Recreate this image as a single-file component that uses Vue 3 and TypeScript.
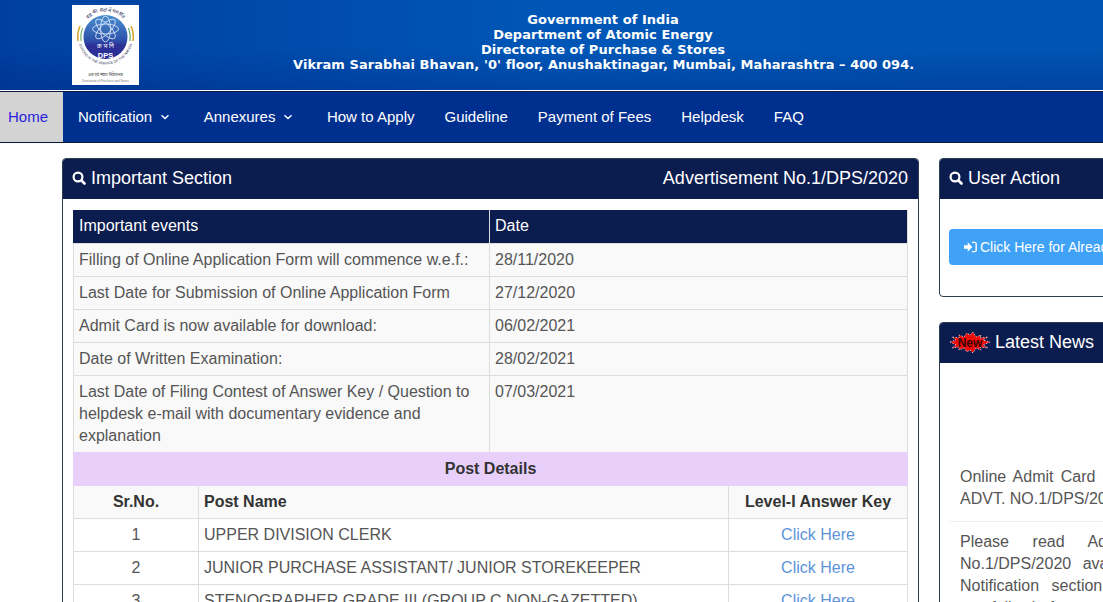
<script setup lang="ts">
const navItems = [
  { label: "Notification", caret: true },
  { label: "Annexures", caret: true },
  { label: "How to Apply", caret: false },
  { label: "Guideline", caret: false },
  { label: "Payment of Fees", caret: false },
  { label: "Helpdesk", caret: false },
  { label: "FAQ", caret: false },
];

const events = [
  { name: "Filling of Online Application Form will commence w.e.f.:", date: "28/11/2020" },
  { name: "Last Date for Submission of Online Application Form", date: "27/12/2020" },
  { name: "Admit Card is now available for download:", date: "06/02/2021" },
  { name: "Date of Written Examination:", date: "28/02/2021" },
  {
    name: "Last Date of Filing Contest of Answer Key / Question to helpdesk e-mail with documentary evidence and explanation",
    date: "07/03/2021",
  },
];

const posts = [
  "UPPER DIVISION CLERK",
  "JUNIOR PURCHASE ASSISTANT/ JUNIOR STOREKEEPER",
  "STENOGRAPHER GRADE III (GROUP C NON-GAZETTED)",
];

const burst =
  "0,10 6,8 2,5 9,6 9,3 14,5 17,1 20,3 23,0 26,5 31,3 30,6 38,5 33,8 40,10 33,13 38,16 30,15 31,18 26,16 23,21 20,18 17,20 14,16 9,18 9,15 2,16 6,13";
</script>

<template>
  <header class="top">
    <svg class="logo" viewBox="0 0 67 80" width="67" height="80">
      <defs>
        <linearGradient id="disc" x1="0" y1="0" x2="0" y2="1">
          <stop offset="0" stop-color="#4a90d0" />
          <stop offset="0.55" stop-color="#2f55ad" />
          <stop offset="0.7" stop-color="#2b2f96" />
        </linearGradient>
        <path id="ring-top" d="M8 32a25.500 25.500 0 0 1 51 0" />
        <path id="ring-bottom" d="M6 32a27.500 27.500 0 0 0 55 0" />
      </defs>
      <rect width="67" height="80" fill="#fff" />
      <path d="M6 36a28 28 0 0 1 2-15" fill="none" stroke="#d9a531" stroke-width="1.600" />
      <path d="M9 36a25 25 0 0 1 1.500-13" fill="none" stroke="#5aa54f" stroke-width="1" />
      <path d="M61 36a28 28 0 0 0-2-15" fill="none" stroke="#d9a531" stroke-width="1.600" />
      <path d="M58 36a25 25 0 0 0-1.500-13" fill="none" stroke="#3c9a4a" stroke-width="1" />
      <circle cx="33.500" cy="32" r="22" fill="url(#disc)" />
      <g fill="none" stroke="#e4edf9" stroke-width="0.800">
        <ellipse cx="33.500" cy="24" rx="5" ry="13" />
        <ellipse cx="33.500" cy="24" rx="5" ry="13" transform="rotate(45 33.500 24)" />
        <ellipse cx="33.500" cy="24" rx="5" ry="13" transform="rotate(90 33.500 24)" />
        <ellipse cx="33.500" cy="24" rx="5" ry="13" transform="rotate(135 33.500 24)" />
      </g>
      <text x="33.500" y="43" class="logo-hi">क भ नि</text>
      <text x="33.500" y="53" class="logo-dps">DPS</text>
      <text class="logo-ring logo-ring-hi">
        <textPath href="#ring-top" startOffset="50%">राष्ट्र की सेवा में समर्पित</textPath>
      </text>
      <text class="logo-ring">
        <textPath href="#ring-bottom" startOffset="50%">STRONG IN THE SERVICE OF THE NATION</textPath>
      </text>
      <text x="33.500" y="71" class="logo-small">क्रय एवं भंडार निदेशालय</text>
      <text x="33.500" y="77" class="logo-tiny">Directorate of Purchase and Stores</text>
    </svg>
    <div class="top-text">
      <div>Government of India</div>
      <div>Department of Atomic Energy</div>
      <div>Directorate of Purchase &amp; Stores</div>
      <div>Vikram Sarabhai Bhavan, '0' floor, Anushaktinagar, Mumbai, Maharashtra – 400 094.</div>
    </div>
  </header>

  <nav class="nav">
    <a class="nav-home">Home</a>
    <a v-for="item in navItems" :key="item.label" class="nav-item">
      {{ item.label }}
      <svg v-if="item.caret" class="caret" viewBox="0 0 10 6" width="10" height="6">
        <path d="M1.500 1.200 5 4.600l3.500-3.400" fill="none" stroke="#fff" stroke-width="1.400" />
      </svg>
    </a>
  </nav>

  <main class="page">
    <section class="panel panel-main">
      <div class="panel-head">
        <h3>
          <svg class="search" viewBox="0 0 14 14" width="14" height="14">
            <circle cx="6" cy="6" r="4.400" fill="none" stroke="#fff" stroke-width="2.200" />
            <path d="M9.500 9.500l3 3" stroke="#fff" stroke-width="2.600" stroke-linecap="round" />
          </svg>
          Important Section
        </h3>
        <span class="advt">Advertisement No.1/DPS/2020</span>
      </div>
      <div class="panel-body">
        <table class="events">
          <colgroup>
            <col class="col-event" />
            <col />
          </colgroup>
          <thead>
            <tr>
              <th>Important events</th>
              <th>Date</th>
            </tr>
          </thead>
          <tbody>
            <tr v-for="row in events" :key="row.date">
              <td>{{ row.name }}</td>
              <td>{{ row.date }}</td>
            </tr>
          </tbody>
        </table>
        <table class="posts">
          <colgroup>
            <col class="col-sr" />
            <col />
            <col class="col-key" />
          </colgroup>
          <thead>
            <tr>
              <th colspan="3" class="posts-title">Post Details</th>
            </tr>
            <tr class="posts-head">
              <th class="center">Sr.No.</th>
              <th>Post Name</th>
              <th class="center">Level-I Answer Key</th>
            </tr>
          </thead>
          <tbody>
            <tr v-for="(post, i) in posts" :key="post">
              <td class="center">{{ i + 1 }}</td>
              <td>{{ post }}</td>
              <td class="center"><a class="link">Click Here</a></td>
            </tr>
          </tbody>
        </table>
      </div>
    </section>

    <aside class="side">
      <section class="panel">
        <div class="panel-head">
          <h3>
            <svg class="search" viewBox="0 0 14 14" width="14" height="14">
              <circle cx="6" cy="6" r="4.400" fill="none" stroke="#fff" stroke-width="2.200" />
              <path d="M9.500 9.500l3 3" stroke="#fff" stroke-width="2.600" stroke-linecap="round" />
            </svg>
            User Action
          </h3>
        </div>
        <div class="action-body">
          <a class="action-btn">
            <svg class="login" viewBox="0 0 14 12" width="13" height="12">
              <path d="M0 4h4V1l5 5-5 5V8H0z" fill="#fff" />
              <path d="M8.500 1H11.500a1.600 1.600 0 0 1 1.600 1.600v6.800A1.600 1.600 0 0 1 11.500 11H8.500" fill="none" stroke="#fff" stroke-width="1.500" />
            </svg>
            Click Here for Already Registered User
          </a>
        </div>
      </section>

      <section class="panel">
        <div class="panel-head news-head">
          <h3>
            <svg class="burst" viewBox="0 0 40 21" width="40" height="21">
              <polygon :points="burst" fill="#ee0b0b" stroke="#fff" stroke-width="0.700" stroke-dasharray="1.500 1.500" />
              <text x="20" y="14.500" class="burst-text">New</text>
            </svg>
            Latest News
          </h3>
        </div>
        <div class="news">
          <p>Online Admit Card is now available for ADVT. NO.1/DPS/2020 candidates.</p>
          <p>Please read Advertisement for No.1/DPS/2020 available under the Notification section of this website carefully before you fill the online application form.</p>
        </div>
      </section>
    </aside>
  </main>
</template>

<style scoped>
.top {
  height: 91px;
  box-sizing: border-box;
  padding-top: 5px;
  padding-left: 72px;
  display: flex;
  background:
    linear-gradient(180deg, rgba(0, 30, 120, 0) 55%, rgba(0, 30, 120, 0.3) 100%),
    linear-gradient(90deg, #003f9f 0%, #0056b6 50%, #0054b2 100%);
  border-bottom: 1px solid #fff;
}

.logo {
  flex-shrink: 0;
}

.logo-hi,
.logo-dps,
.logo-ring,
.logo-small,
.logo-tiny {
  text-anchor: middle;
  font-family: "Noto Sans", "Liberation Sans", sans-serif;
}

.logo-hi {
  font-size: 6px;
  fill: #fff;
}

.logo-dps {
  font-family: "Liberation Sans", sans-serif;
  font-size: 7.500px;
  font-weight: 700;
  fill: #fff;
}

.logo-ring {
  font-family: "Liberation Sans", sans-serif;
  font-size: 3.500px;
  fill: #2b2b55;
}

.logo-ring-hi {
  font-size: 5px;
}

.logo-small {
  font-size: 4px;
  fill: #333;
}

.logo-tiny {
  font-family: "Liberation Sans", sans-serif;
  font-size: 3px;
  fill: #777;
}

.top-text {
  width: 620px;
  margin-left: 154px;
  padding-top: 7px;
  text-align: center;
  color: #fff;
  font-family: "DejaVu Sans", sans-serif;
  font-weight: 700;
  font-size: 13px;
  letter-spacing: 0.05px;
  line-height: 15px;
  white-space: nowrap;
}

.nav {
  height: 50px;
  display: flex;
  align-items: stretch;
  background: #00308f;
  border-top: 1px solid #0a1a3c;
  border-bottom: 1px solid #0a1a3c;
  font-family: "Liberation Sans", sans-serif;
  font-size: 15px;
  color: #fff;
}

.nav-home {
  width: 63px;
  box-sizing: border-box;
  padding: 0 0 2px 8px;
  background: #d3d3d3;
  color: #2a1fdc;
  display: flex;
  align-items: center;
}

.nav-item {
  display: flex;
  align-items: center;
  gap: 8px;
  padding: 0 15px 2px;
  white-space: nowrap;
}

.caret {
  margin-top: 2px;
  margin-right: 3.500px;
}

.page {
  display: flex;
  align-items: flex-start;
  gap: 20px;
  padding: 15px 0 0 62px;
  width: 1300px;
  font-family: "Liberation Sans", sans-serif;
  font-size: 16px;
  line-height: 22px;
  color: #555;
}

.panel {
  border: 1px solid #2f3d4d;
  border-radius: 4px;
  background: #fff;
  box-sizing: border-box;
  overflow: hidden;
}

.panel-main {
  width: 857px;
  flex-shrink: 0;
}

.panel-head {
  height: 40px;
  box-sizing: border-box;
  padding: 0 10px 2px;
  background: #0b1c4f;
  color: #fff;
  display: flex;
  align-items: center;
  justify-content: space-between;
}

.panel-head h3 {
  margin: 0;
  font-size: 18px;
  font-weight: 400;
  display: flex;
  align-items: center;
  gap: 4px;
}

.search {
  margin-left: -1px;
  margin-right: 1px;
}

.advt {
  font-size: 18px;
}

.panel-body {
  padding: 11px 10px 0;
}

table {
  width: 100%;
  border-collapse: collapse;
  table-layout: fixed;
}

th,
td {
  border: 1px solid #ddd;
  padding: 5px;
  text-align: left;
  vertical-align: top;
}

.col-event {
  width: 416px;
}

.events th {
  padding: 4px 5px 6px;
  background: #0b1c4f;
  color: #fff;
  font-weight: 400;
  border-color: #0b1c4f #ddd #ddd #0b1c4f;
}

.events td {
  background: #f9f9f9;
}

.posts {
  margin-top: -1px;
}

.col-sr {
  width: 125px;
}

.col-key {
  width: 179px;
}

.posts-title {
  background: #e8d0fb;
  border-color: #e8d0fb;
  text-align: center;
  color: #333;
}

.posts-head th {
  background: #f9f9f9;
  color: #333;
}

.posts td {
  background: #fff;
}

.center {
  text-align: center;
}

.link {
  color: #5d93d8;
}

.side {
  width: 314px;
  flex-shrink: 0;
  display: flex;
  flex-direction: column;
  gap: 25px;
}

.action-body {
  height: 97px;
  box-sizing: border-box;
  padding: 30px 9px 0;
}

.action-btn {
  height: 36px;
  background: #3fa2f7;
  border-radius: 4px;
  color: #fff;
  font-size: 14px;
  display: flex;
  align-items: center;
  gap: 3px;
  padding: 0 15px;
  white-space: nowrap;
}

.login {
  flex-shrink: 0;
}

.news-head {
  justify-content: flex-start;
}

.burst {
  flex-shrink: 0;
  margin-right: 1px;
}

.burst-text {
  font-size: 12px;
  font-weight: 700;
  fill: #3a0505;
  text-anchor: middle;
}

.news {
  padding: 103px 10px 0;
  height: 281px;
  box-sizing: border-box;
}

.news p {
  margin: 0 0 9px;
  padding: 0 10px 11px;
  text-align: justify;
  border-bottom: 1px solid #eee;
}

.news p:first-child {
  margin-right: -15px;
}
</style>

<style>
html,
body {
  margin: 0;
  overflow: hidden;
  background: #fff;
}
</style>
